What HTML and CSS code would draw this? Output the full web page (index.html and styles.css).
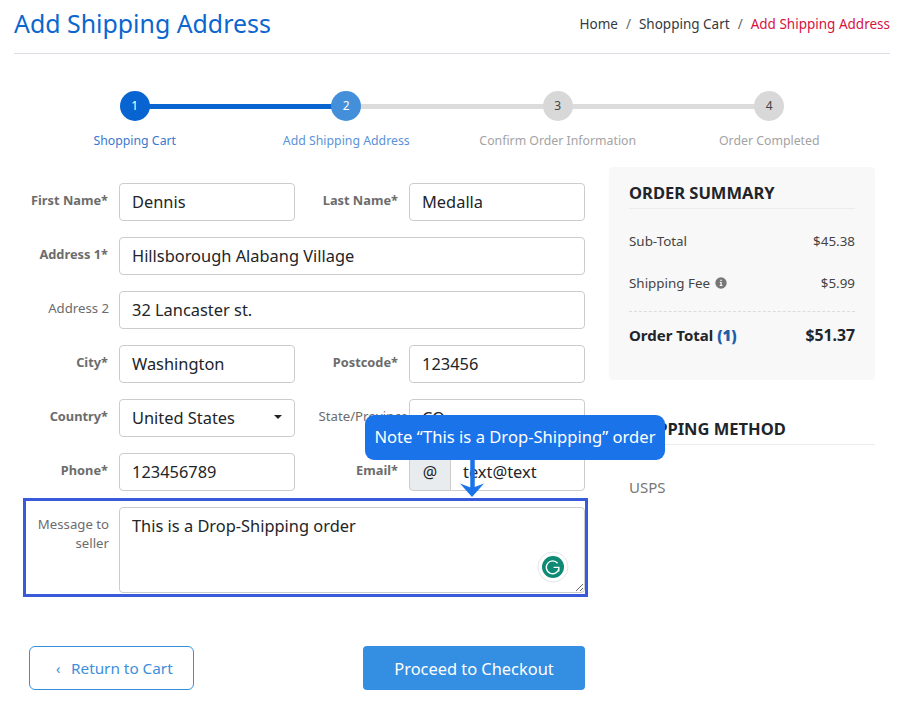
FILE: index.html
```html
<!DOCTYPE html>
<html lang="en">
<head>
  <meta charset="UTF-8">
  <title>Add Shipping Address</title>
  <link rel="stylesheet" href="styles.css">
</head>
<body>

  <div class="page">
    <header class="page-head">
      <h1>Add Shipping Address</h1>
      <nav class="crumbs">
        <a>Home</a><span class="sep">/</span><a>Shopping Cart</a><span class="sep">/</span><a class="current">Add Shipping Address</a>
      </nav>
    </header>

    <!-- Checkout steps -->
    <ol class="steps">
      <li class="step done"><span class="dot">1</span><span class="step-name">Shopping Cart</span></li>
      <li class="step active"><span class="dot">2</span><span class="step-name">Add Shipping Address</span></li>
      <li class="step"><span class="dot">3</span><span class="step-name">Confirm Order Information</span></li>
      <li class="step"><span class="dot">4</span><span class="step-name">Order Completed</span></li>
    </ol>

    <div class="checkout">
      <form class="address-form">
        <div class="fields">
          <label class="req">First Name*</label>
          <input type="text" value="Dennis">
          <label class="req">Last Name*</label>
          <input type="text" value="Medalla">

          <label class="req">Address 1*</label>
          <input class="wide" type="text" value="Hillsborough Alabang Village">

          <label>Address 2</label>
          <input class="wide" type="text" value="32 Lancaster st.">

          <label class="req">City*</label>
          <input type="text" value="Washington">
          <label class="req">Postcode*</label>
          <input type="text" value="123456">

          <label class="req">Country*</label>
          <div class="select">United States<span class="caret"></span></div>
          <label class="state">State/Province</label>
          <input type="text" value="CO">

          <label class="req">Phone*</label>
          <input type="text" value="123456789">
          <label class="req">Email*</label>
          <div class="input-group">
            <span class="addon">@</span>
            <input type="text" value="text@text">
          </div>
        </div>

        <div class="message-row">
          <label>Message to seller</label>
          <div class="message-box">
            <textarea>This is a Drop-Shipping order</textarea>
            <svg class="grammarly" width="32" height="32" viewBox="0 0 32 32">
              <circle cx="16" cy="16" r="15" fill="#fff" stroke="#e3e5ea"/>
              <circle cx="16" cy="16" r="11" fill="#0e8a74"/>
              <path d="M20.6 12.2a6.4 6.4 0 1 0 1.3 5.6M16.6 16.4h5.2v4" fill="none" stroke="#fff" stroke-width="1.4"/>
            </svg>
          </div>
        </div>

        <div class="actions">
          <a class="btn btn-back"><span class="chev">‹</span>Return to Cart</a>
          <a class="btn btn-next">Proceed to Checkout</a>
        </div>

        <!-- Annotation over the form -->
        <div class="callout">Note “This is a Drop-Shipping” order</div>
        <svg class="callout-arrow" width="24" height="38" viewBox="0 0 24 38">
          <path d="M12.500 0v28" stroke="#1a73e8" stroke-width="4.500"/>
          <path d="M0 23.500l12 4.500 12-4.500-12 13.500z" fill="#1a73e8"/>
        </svg>
      </form>

      <aside class="side">
        <section class="summary">
          <h2>ORDER SUMMARY</h2>
          <div class="line"><span>Sub-Total</span><span class="amount">$45.38</span></div>
          <div class="line fee">
            <span>Shipping Fee
              <svg class="info" width="12" height="12" viewBox="0 0 12 12">
                <circle cx="6" cy="6" r="5.700" fill="#777"/>
                <path d="M4.800 5h1.900v3.100h.7v.9H4.700v-.9h.8V5.900h-.7zM5.300 2.700h1.400v1.400H5.300z" fill="#fff"/>
              </svg>
            </span>
            <span class="amount">$5.99</span>
          </div>
          <div class="line total"><span>Order Total <b>(1)</b></span><span class="grand">$51.37</span></div>
        </section>

        <section class="shipping">
          <h2>SHIPPING METHOD</h2>
          <p>USPS</p>
        </section>
      </aside>
    </div>
  </div>

</body>
</html>
```

FILE: styles.css
```css
html, body {
  margin: 0;
  padding: 0;
  background: #fff;
  font-family: 'Noto Sans', sans-serif;
  color: #212529;
}

* {
  box-sizing: border-box;
}

.page {
  width: 900px;
  padding: 0 10px 0 14px;
}

.page-head {
  display: flex;
  justify-content: space-between;
  align-items: center;
  height: 54px;
  padding-bottom: 7px;
  border-bottom: 1px solid #dcdce6;
}

h1 {
  margin: 0;
  font-size: 24.900px;
  font-weight: 400;
  color: #0b66d0;
}

.crumbs {
  padding-top: 2px;
  font-size: 13.500px;
  color: #343a40;
}

.crumbs .sep {
  margin: 0 8px;
  color: #666;
}

.crumbs .current {
  color: #d6113f;
}

.steps {
  display: grid;
  grid-template-columns: repeat(4, 1fr);
  margin: 37px 15px 0 15px;
  padding: 0;
  list-style: none;
}

.step {
  position: relative;
  display: flex;
  flex-direction: column;
  align-items: center;
  gap: 11px;
  font-size: 12.300px;
  color: #a3a3a3;
}

.step::before {
  content: "";
  position: absolute;
  top: 13px;
  left: 50%;
  width: 100%;
  height: 5px;
  background: #dcdcdc;
}

.step:last-child::before {
  display: none;
}

.step.done::before {
  background: #0764d0;
}

.dot {
  position: relative;
  width: 30px;
  height: 30px;
  border-radius: 50%;
  background: #d8d8d8;
  color: #444;
  font-size: 12px;
  line-height: 30px;
  text-align: center;
}

.done .dot {
  background: #0764d0;
  color: #fff;
}

.active .dot {
  background: #438fd9;
  color: #fff;
}

.done .step-name {
  color: #3a78cf;
}

.active .step-name {
  color: #5a93d8;
}

.checkout {
  display: flex;
  margin-top: 18px;
}

.address-form {
  position: relative;
  width: 595px;
  padding-top: 16px;
}

.fields {
  display: grid;
  grid-template-columns: 95px 176px 94px 176px;
  column-gap: 10px;
  row-gap: 16px;
}

label {
  padding-top: 8px;
  font-size: 13.200px;
  line-height: 18px;
  text-align: right;
  color: #6c6c6c;
}

label.req {
  padding-right: 1px;
  font-size: 12.800px;
  font-weight: 700;
}

label.state {
  margin-right: -9px;
}

input,
.select,
textarea {
  width: 100%;
  height: 38px;
  padding: 0 12px 2px;
  border: 1px solid #ccc;
  border-radius: 4px;
  background: #fff;
  font-family: 'Noto Sans', sans-serif;
  font-size: 16.400px;
  color: #212529;
  outline: none;
}

.wide {
  grid-column: span 3;
}

.select {
  display: flex;
  justify-content: space-between;
  align-items: center;
}

.caret {
  width: 0;
  height: 0;
  border: 4px solid transparent;
  border-top-color: #222;
  border-bottom: 0;
}

.input-group {
  display: flex;
}

.addon {
  flex: 0 0 42px;
  height: 38px;
  border: 1px solid #ccc;
  border-radius: 4px 0 0 4px;
  background: #e9ecef;
  font-size: 16px;
  line-height: 36px;
  text-align: center;
}

.input-group input {
  margin-left: -1px;
  border-radius: 0 4px 4px 0;
}

.message-row {
  display: grid;
  grid-template-columns: 83px 466px;
  column-gap: 10px;
  width: 565px;
  height: 99px;
  margin: 7px 0 0 9px;
  padding: 6px 0 0;
  border: 3px solid #3a5bd9;
}

.message-row label {
  padding-top: 8px;
  line-height: 19px;
}

.message-box {
  position: relative;
  height: 86px;
}

textarea {
  display: block;
  height: 86px;
  padding-top: 6px;
  line-height: 24px;
}

.grammarly {
  position: absolute;
  right: 16px;
  bottom: 10px;
}

.actions {
  display: flex;
  justify-content: space-between;
  width: 556px;
  margin: 49px 0 0 15px;
}

.btn {
  display: flex;
  align-items: center;
  justify-content: center;
  height: 44px;
  border-radius: 4px;
  font-size: 16.400px;
}

.btn-back {
  justify-content: flex-start;
  width: 165px;
  padding-left: 26px;
  border: 1px solid #358fe0;
  border-radius: 6px;
  font-size: 15.300px;
  color: #3d8fdd;
}

.chev {
  width: 15px;
  font-size: 14px;
}

.btn-next {
  width: 222px;
  background: #348fe2;
  color: #fff;
}

.callout {
  position: absolute;
  top: 248px;
  left: 351px;
  width: 300px;
  height: 45px;
  border-radius: 9px;
  background: #1a73e8;
  color: #fff;
  font-size: 16.600px;
  line-height: 43px;
  text-align: center;
}

.callout-arrow {
  position: absolute;
  top: 293px;
  left: 446px;
}

.side {
  width: 266px;
}

.summary {
  height: 213px;
  padding: 14px 20px 0;
  border-radius: 4px;
  background: #f8f8f8;
}

h2 {
  margin: 0;
  padding-bottom: 4px;
  border-bottom: 1px solid #ececec;
  font-size: 16.500px;
  font-weight: 700;
  line-height: 23px;
  color: #212529;
}

.line {
  display: flex;
  justify-content: space-between;
  align-items: center;
  height: 18px;
  margin-top: 23px;
  font-size: 13.400px;
  color: #444;
}

.fee {
  margin-top: 24px;
}

.info {
  margin-left: 1px;
  vertical-align: -1px;
}

.total {
  height: 46px;
  margin-top: 19px;
  border-top: 1px dashed #dcdcdc;
  font-size: 15px;
  font-weight: 700;
  color: #212529;
}

.total b {
  color: #1f5fa8;
}

.grand {
  font-size: 15.800px;
}

.shipping {
  margin-top: 37px;
  padding: 0 0 0 20px;
}

.shipping p {
  margin: 32px 0 0;
  font-size: 15px;
  color: #777;
}
```
